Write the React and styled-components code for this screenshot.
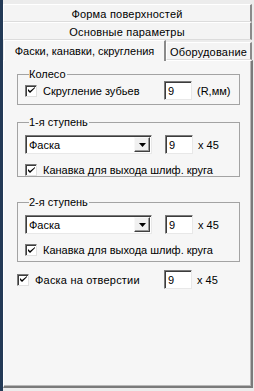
import React from 'react'
import styled, { createGlobalStyle } from 'styled-components'

const GlobalStyle = createGlobalStyle`
  html, body { margin: 0; padding: 0; background: #ececec; }
  body { font-family: "Liberation Sans", Arial, sans-serif; font-size: 11px; color: #000; }
`;

const Frame = styled.div`
  box-sizing: border-box;
  width: 254px;
  height: 391px;
  border-left: 3px solid #233a56;
  padding: 4px 1px 3px 0;
  display: flex;
  flex-direction: column;
  background: #ececec;
`;

const TabStrip = styled.div`
  display: flex;
  flex-direction: column;
  padding-right: 1px;
`;

const TabRow = styled.div`
  display: flex;
  align-items: flex-end;
  height: ${p => p.$h}px;
`;

const Tab = styled.div`
  box-sizing: border-box;
  flex: ${p => (p.$grow ? 1 : 'none')};
  width: ${p => (p.$w ? `${p.$w}px` : 'auto')};
  height: ${p => p.$h}px;
  display: flex;
  align-items: center;
  justify-content: center;
  background: #f4f4f4;
  border-top: 1px solid #fff;
  border-left: 1px solid #fff;
  border-right: 2px solid #8a8a8a;
  border-bottom: 1px solid #dcdcdc;
  white-space: nowrap;
  padding-top: 2px;
  letter-spacing: 0.2px;
`;

const ActiveTab = styled(Tab)`
  position: relative;
  z-index: 1;
  margin-bottom: -1px;
  margin-left: 1px;
  border-bottom: none;
  background: #f6f6f6;
  padding-top: 0;
  letter-spacing: 0;
`;

const Panel = styled.div`
  flex: 1;
  box-sizing: border-box;
  background: #f6f6f6;
  border-top: 1px solid #fff;
  border-left: 1px solid #fff;
  border-right: 2px solid #7a7a7a;
  border-bottom: 2px solid #7a7a7a;
  box-shadow: inset -1px -1px 0 #b8b8b8;
  padding: 7px 0 0 13px;
  display: flex;
  flex-direction: column;
`;

const Group = styled.fieldset`
  box-sizing: border-box;
  width: 223px;
  height: ${p => p.$h}px;
  margin: 0 0 ${p => p.$mb}px 0;
  padding: 0 0 0 7px;
  border: 1px solid #a3a3a3;
  min-width: 0;
  display: flex;
  flex-direction: column;
`;

const Legend = styled.legend`
  padding: 0 1px 0 0;
  margin-left: 4px;
  line-height: 12px;
`;

const Row = styled.div`
  display: flex;
  align-items: center;
  height: ${p => p.$h || 19}px;
  margin-top: ${p => p.$mt || 0}px;
`;

const Box = styled.span`
  box-sizing: border-box;
  width: 12px;
  height: 12px;
  flex: none;
  background: #fff;
  border-top: 1px solid #7a7a7a;
  border-left: 1px solid #7a7a7a;
  border-right: 1px solid #e0e0e0;
  border-bottom: 1px solid #e0e0e0;
  box-shadow: inset 1px 1px 0 #3c3c3c;
  display: flex;
  align-items: center;
  justify-content: center;
  margin-right: 6px;
`;

const Label = styled.span`
  white-space: nowrap;
  width: ${p => (p.$w ? `${p.$w}px` : 'auto')};
  letter-spacing: ${p => p.$ls || 0}px;
`;

const Field = styled.div`
  box-sizing: border-box;
  width: ${p => p.$w}px;
  height: 19px;
  flex: none;
  margin-left: ${p => p.$ml || 0}px;
  background: #fff;
  border-top: 1px solid #7a7a7a;
  border-left: 1px solid #7a7a7a;
  border-right: 1px solid #e8e8e8;
  border-bottom: 1px solid #e8e8e8;
  box-shadow: inset 1px 1px 0 #3c3c3c;
  display: flex;
  align-items: center;
  padding-left: 3px;
`;

const Select = styled(Field)`
  padding: 0 1px 0 3px;
  justify-content: space-between;
`;

const DropButton = styled.span`
  box-sizing: border-box;
  width: 16px;
  height: 15px;
  background: #f0f0f0;
  border-top: 1px solid #f8f8f8;
  border-left: 1px solid #f8f8f8;
  border-right: 1px solid #404040;
  border-bottom: 1px solid #404040;
  box-shadow: inset -1px -1px 0 #9a9a9a;
  display: flex;
  align-items: center;
  justify-content: center;
`;

const Unit = styled.span`
  margin-left: 5px;
  white-space: nowrap;
`;

const Check = () => (
  <Box>
    <svg width="7" height="7" viewBox="0 0 7 7">
      <path d="M0 2v2l2 2 5-5V0L2 4z" fill="#000" />
    </svg>
  </Box>
);

const Arrow = () => (
  <svg width="7" height="4" viewBox="0 0 7 4">
    <path d="M0 0h7L3.5 4z" fill="#000" />
  </svg>
);

const StageGroup = ({ title, h, mb }) => (
  <Group $h={h} $mb={mb}>
    <Legend>{title}</Legend>
    <Row $mt={7}>
      <Select $w={127}>
        <span>Фаска</span>
        <DropButton><Arrow /></DropButton>
      </Select>
      <Field $w={28} $ml={13}>9</Field>
      <Unit>x 45</Unit>
    </Row>
    <Row $mt={8} $h={16}>
      <Check />
      <Label>Канавка для выхода шлиф. круга</Label>
    </Row>
  </Group>
);

export default function App() {
  return (
    <>
      <GlobalStyle />
      <Frame>
        <TabStrip>
          <TabRow $h={18}>
            <Tab $grow $h={18}>Форма поверхностей</Tab>
          </TabRow>
          <TabRow $h={18}>
            <Tab $grow $h={18}>Основные параметры</Tab>
          </TabRow>
          <TabRow $h={20}>
            <ActiveTab $w={162} $h={21}>Фаски, канавки, скругления</ActiveTab>
            <Tab $grow $h={18}>Оборудование</Tab>
          </TabRow>
        </TabStrip>
        <Panel>
          <Group $h={37} $mb={11}>
            <Legend>Колесо</Legend>
            <Row $mt={1}>
              <Check />
              <Label $w={121}>Скругление зубьев</Label>
              <Field $w={28}>9</Field>
              <Unit>(R,мм)</Unit>
            </Row>
          </Group>
          <StageGroup title="1-я ступень" h={61} mb={19} />
          <StageGroup title="2-я ступень" h={66} mb={8} />
          <Row>
            <Check />
            <Label $w={129} $ls={0.2}>Фаска на отверстии</Label>
            <Field $w={28}>9</Field>
            <Unit>x 45</Unit>
          </Row>
        </Panel>
      </Frame>
    </>
  );
}
